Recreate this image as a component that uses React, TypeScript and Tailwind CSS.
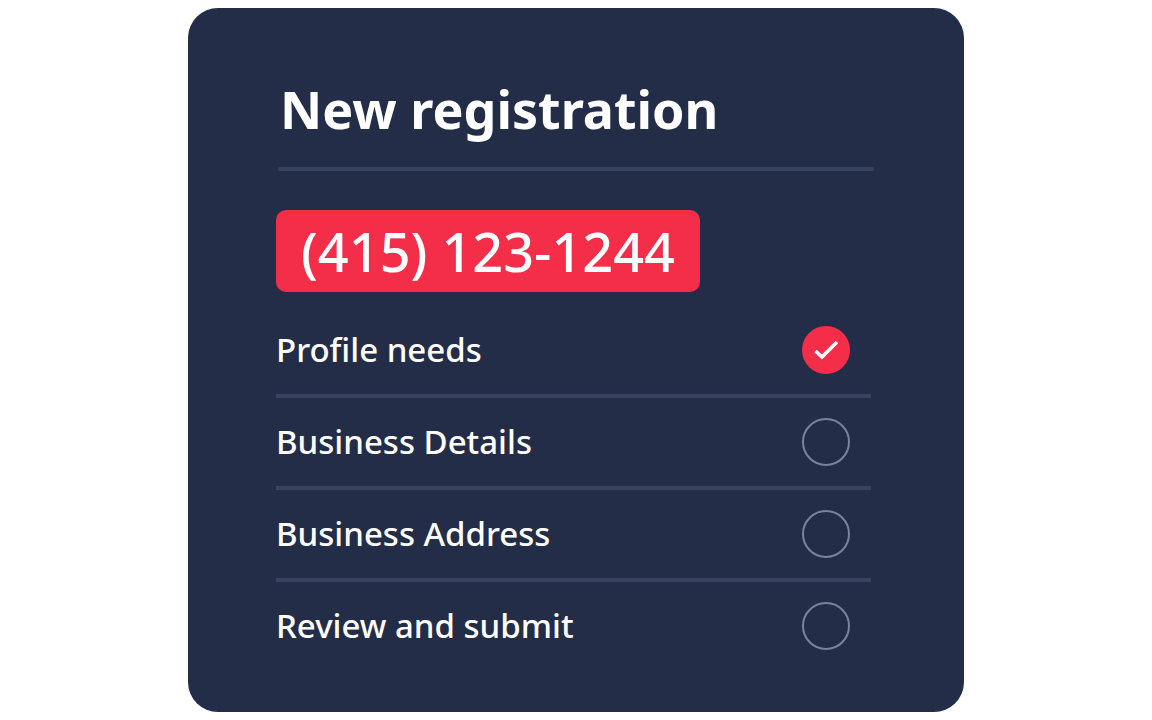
const steps = [
  { label: "Profile needs", done: true },
  { label: "Business Details", done: false },
  { label: "Business Address", done: false },
  { label: "Review and submit", done: false },
];

export default function App() {
  return (
    <div className="flex h-[720px] w-[1152px] justify-center bg-white pt-2 font-['Noto_Sans',sans-serif] text-white">
      <div className="h-[704px] w-[776px] rounded-[30px] bg-[#242d47] pl-[88px] pr-[91px]">
        <h1 className="ml-[4px] mt-[66px] h-[70px] text-[52px] font-bold leading-[70px]">New registration</h1>
        <div className="ml-[2px] mt-[23px] h-1 w-[596px] rounded-full bg-[#38435f]" />
        <div className="mt-[39px] flex h-[82px] w-[424px] items-center justify-center rounded-[10px] bg-[#f42e48] text-[54px] font-medium leading-none">
          (415) 123-1244
        </div>
        <div className="mt-[14px]">
          {steps.map((step, i) => (
            <div
              key={step.label}
              className={`flex h-[92px] w-[595px] items-center justify-between border-b-4 pr-[21px] ${
                i < steps.length - 1 ? "border-[#38435f]" : "border-transparent"
              }`}
            >
              <span className="mb-[2px] text-[33px] font-medium leading-none">{step.label}</span>
              {step.done ? (
                <div className="flex h-12 w-12 items-center justify-center rounded-full bg-[#f42e48]">
                  <svg width="26" height="26" viewBox="0 0 26 26" fill="none">
                    <path d="M2.5 14l6.5 6L24 5" stroke="white" strokeWidth="3.6" />
                  </svg>
                </div>
              ) : (
                <div className="h-12 w-12 rounded-full border-2 border-[#7c829b]" />
              )}
            </div>
          ))}
        </div>
      </div>
    </div>
  );
}
